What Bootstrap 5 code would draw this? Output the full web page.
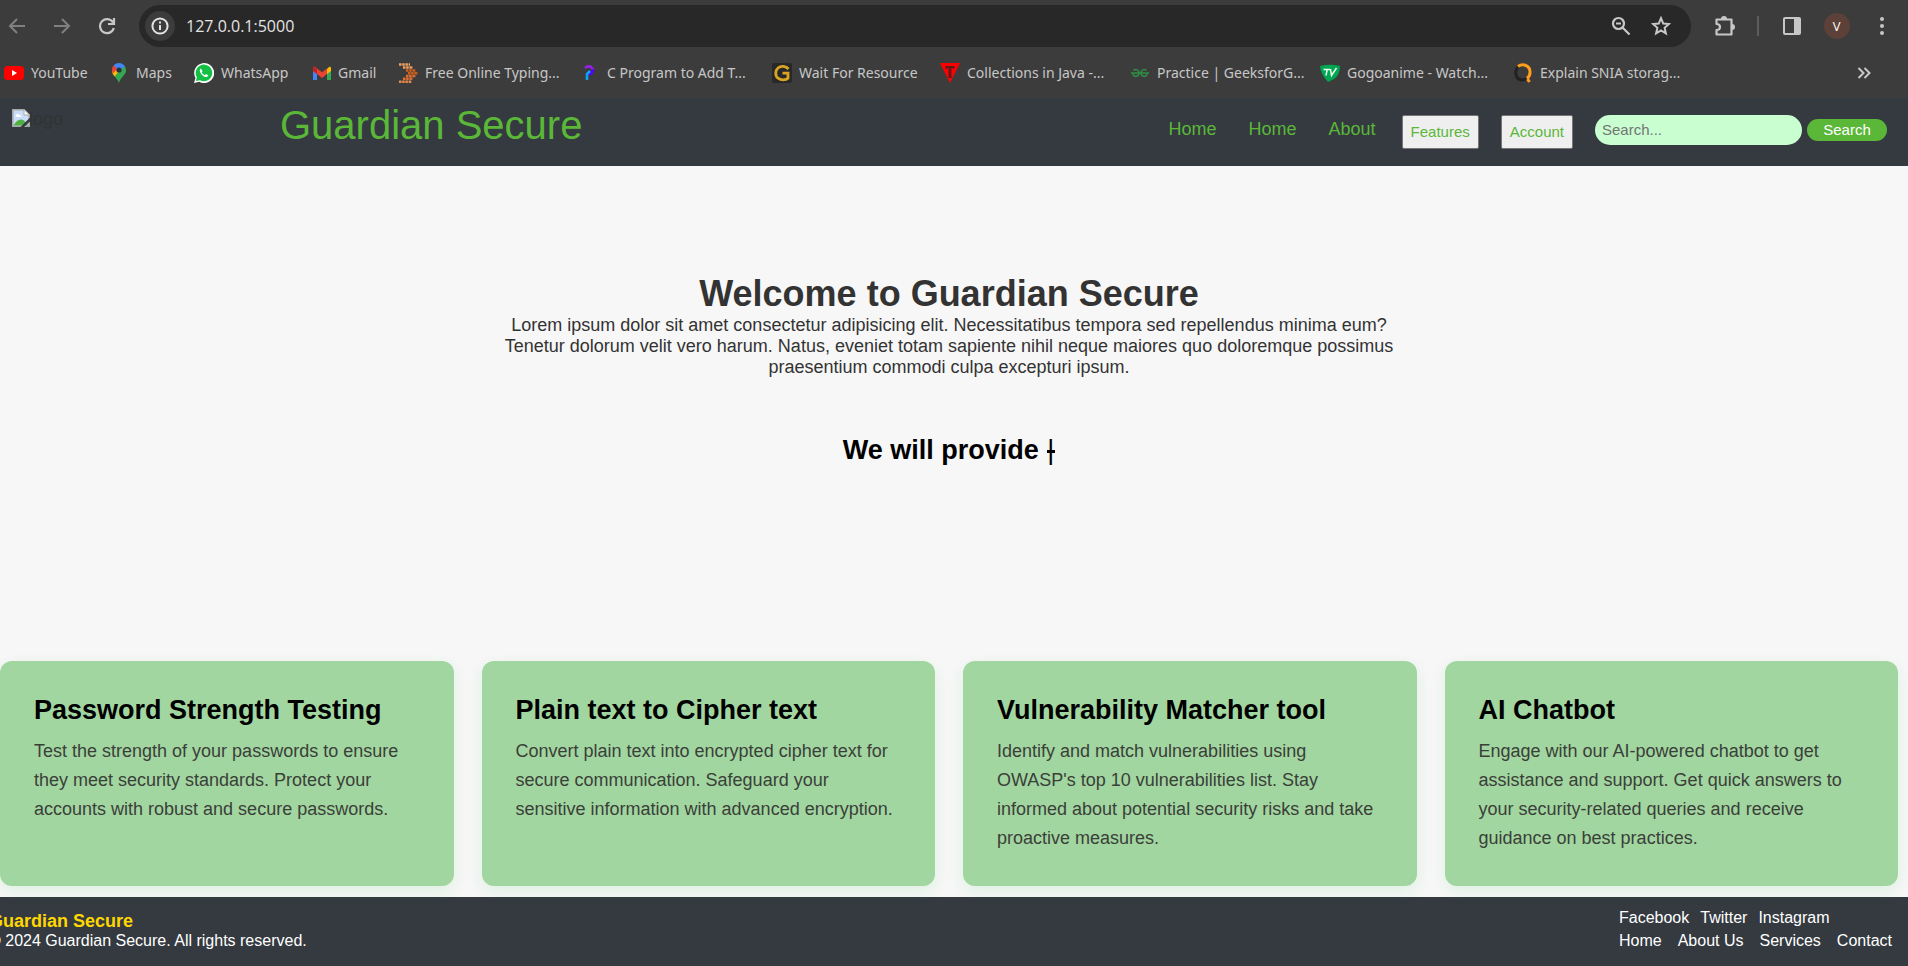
<!DOCTYPE html>
<html lang="en">
<head>
<meta charset="utf-8">
<meta name="viewport" content="width=device-width, initial-scale=1">
<title>Guardian Secure</title>
<link href="https://cdn.jsdelivr.net/npm/bootstrap@5.3.0/dist/css/bootstrap.min.css" rel="stylesheet">
<style>
  body { font-family: "Liberation Sans", Arial, sans-serif; font-size: 18px; line-height: 21px; color: #333; background: #f7f7f7; overflow-x: hidden; }
  svg { display: block; flex: none; }

  /* browser toolbar and bookmarks */
  .chrome-ui { background: #3c3c3c; color: #c7c7c7; font-family: "Open Sans", "Noto Sans", sans-serif; padding-top: 5px; }
  .tool-btn { background: none; border: 0; padding: 0; width: 24px; height: 24px; color: #c7c7c7; display: grid; place-items: center; flex: none; }
  .tool-btn:disabled { color: #808080; }
  .nav-tools { gap: 21px; width: 139px; padding-left: 5px; }
  .omnibox { height: 42px; background: #282828; border-radius: 21px; padding: 0 18px 0 6px; }
  .site-info { width: 30px; height: 30px; border-radius: 50%; background: #3c3c3c; color: #e3e3e3; }
  .address { background: none; border: 0; outline: 0; color: #e3e3e3; font-size: 16px; padding: 0; margin-left: 11px; min-width: 0; }
  .ext-tools { width: 217px; padding: 0 14px 0 22px; }
  .tool-rule { width: 2px; height: 20px; background: #5c5c5c; }
  .avatar { width: 26px; height: 26px; border-radius: 50%; background: #5d4037; color: #fff; font-size: 13px; }
  .bookmarks { height: 51px; padding: 0 32px 0 4px; font-family: "Noto Sans", sans-serif; font-size: 14px; }
  .bookmark-list { display: grid; grid-template-columns: 105px 85px 117px 87px 182px 192px 168px 190px 190px 193px auto; }
  .bookmark { display: flex; align-items: center; gap: 7px; color: #c7c7c7; text-decoration: none; white-space: nowrap; }

  /* site header */
  .site-nav { background: #343a40; min-height: 68px; padding: 0 21px 0 12px; }
  .logo-box { width: 50px; margin-top: 11px; color: #333; text-decoration: none; display: flex; }
  .logo-box svg { margin-right: -1px; }
  .brand-name { color: #5ab738; font-size: 40px; line-height: 46px; margin: 4px 0 0 218px; text-decoration: none; }
  .site-menu { padding-top: 17px; }
  .menu-links { gap: 32px; margin: 4px 26px 0 0; }
  .site-link { color: #5ab738; text-decoration: none; }
  .drop-btn { height: 34px; padding: 0 8px 2px; background: #efefef; border: 1px solid #767676; border-radius: 2px; color: #5ab738; font-size: 15px; margin-right: 22px; }
  .search-field { width: 207px; height: 30px; padding: 0 7px 1px; border: 0; border-radius: 15px; background: #c8fed0; font-size: 15px; color: #333; }
  .search-field::placeholder { color: #757575; opacity: 1; }
  .search-btn { width: 80px; height: 22px; line-height: 22px; padding: 0; border: 0; border-radius: 11px; background: #5ab738; color: #fff; font-size: 15px; margin-left: 5px; }

  /* hero */
  .page-main { padding-right: 10px; }
  .hero { min-height: 495px; padding-top: 107px; }
  .hero h1 { font-size: 36px; line-height: 42px; font-weight: 700; margin: 0; }
  .hero p { max-width: 900px; margin: 0 auto; }
  .typed { font-size: 27px; line-height: 32px; font-weight: 700; color: #000; margin-top: 56px; }
  .caret { position: relative; display: inline-block; font-weight: 400; width: 9px; }
  .caret::after { content: ""; position: absolute; left: 1px; right: 0; top: 16px; height: 3px; background: #000; }

  /* tools */
  .tool-grid { --bs-gutter-x: 28px; margin: 0 -14px; }
  .tool-card { background: #a2d6a0; border-radius: 12px; padding: 34px 34px 32px; min-height: 225px; box-shadow: 0 5px 16px rgba(40, 200, 70, .12); }
  .tool-card h2 { font-size: 27px; line-height: 30px; font-weight: 700; color: #000; margin: 0 0 12px; }
  .tool-card p { line-height: 29px; margin: 0; color: #3a4039; }

  .site-footer { background: #343a40; color: #fff; margin-top: 11px; min-height: 69px; padding: 9px 16px 0 0; font-size: 16px; line-height: 19px; }
  .site-footer a { color: #fff; text-decoration: none; }
  .about-block { margin-left: -11px; padding-top: 6px; }
  .foot-brand { color: #ffd700; font-size: 18px; font-weight: 700; }
  .foot-links { line-height: 23px; }
  .social-row { gap: 11px; }
  .page-row { gap: 16px; }
</style>
<script src="https://cdn.jsdelivr.net/npm/bootstrap@5.3.0/dist/js/bootstrap.bundle.min.js"></script>
</head>
<body>
<div class="chrome-ui">
  <div class="d-flex align-items-center">
    <div class="nav-tools d-flex align-items-center">
      <button class="tool-btn" disabled aria-label="Back"><svg width="18" height="18" viewBox="0 0 18 18" fill="none" stroke="currentColor" stroke-width="2"><path d="M17 9H2M9 2 2 9l7 7"/></svg></button>
      <button class="tool-btn" disabled aria-label="Forward"><svg width="18" height="18" viewBox="0 0 18 18" fill="none" stroke="currentColor" stroke-width="2"><path d="M1 9h15M9 2l7 7-7 7"/></svg></button>
      <button class="tool-btn" aria-label="Reload"><svg width="18" height="18" viewBox="0 0 18 18" fill="none" stroke="currentColor" stroke-width="2.2"><path d="M15 5.500A7 7 0 1 0 15.800 11M16 1v6h-6"/></svg></button>
    </div>
    <div class="omnibox d-flex align-items-center flex-grow-1">
      <button class="tool-btn site-info" aria-label="Site information"><svg width="18" height="18" viewBox="0 0 18 18" fill="none" stroke="currentColor" stroke-width="2"><circle cx="9" cy="9" r="7.600"/><path d="M9 8v5M9 4.500v2"/></svg></button>
      <input class="address flex-grow-1" type="text" value="127.0.0.1:5000" aria-label="Address">
      <button class="tool-btn me-3" aria-label="Zoom"><svg width="20" height="20" viewBox="0 0 20 20" fill="none" stroke="currentColor" stroke-width="2.200"><circle cx="7.500" cy="7.500" r="5.500"/><path d="M5 7.500h5M11.500 11.500l7 7"/></svg></button>
      <button class="tool-btn" aria-label="Bookmark this page"><svg width="20" height="20" viewBox="0 0 20 20" fill="none" stroke="currentColor" stroke-width="2"><path d="M10 2.200l2.200 5.300 5.700.5-4.300 3.800 1.300 5.600L10 14.400l-4.900 3 1.300-5.600L2.100 8l5.700-.5z"/></svg></button>
    </div>
    <div class="ext-tools d-flex align-items-center justify-content-between">
      <button class="tool-btn" aria-label="Extensions"><svg width="22" height="22" viewBox="0 0 22 22"><path d="M2.500 4.500H17.500V19.500H2.500V15Q6 15 6 12T2.500 9Z" fill="none" stroke="currentColor" stroke-width="2.200" stroke-linejoin="round"/><path d="M7 4a3 3 0 0 1 6 0zM18 9a3 3 0 0 1 0 6z" fill="currentColor"/></svg></button>
      <span class="tool-rule"></span>
      <button class="tool-btn" aria-label="Side panel"><svg width="18" height="18" viewBox="0 0 18 18"><rect x="1" y="1" width="16" height="16" rx="1" fill="none" stroke="currentColor" stroke-width="2"/><path d="M11 1h6v16h-6z" fill="currentColor"/></svg></button>
      <button class="tool-btn avatar" aria-label="Profile">V</button>
      <button class="tool-btn" aria-label="Menu"><svg width="4" height="18" viewBox="0 0 4 18" fill="currentColor"><circle cx="2" cy="2" r="2"/><circle cx="2" cy="9" r="2"/><circle cx="2" cy="16" r="2"/></svg></button>
    </div>
  </div>
  <nav class="bookmarks d-flex align-items-center justify-content-between" aria-label="Bookmarks">
    <div class="bookmark-list">
      <a class="bookmark" href="#"><svg width="20" height="20" viewBox="0 0 20 20"><rect y="3" width="20" height="14" rx="3.500" fill="#f00"/><path d="M8 7l5 3-5 3z" fill="#fff"/></svg>YouTube</a>
      <a class="bookmark" href="#"><svg width="20" height="20" viewBox="0 0 20 20"><path d="M10 20C9 16 3 12 3 7l14 0c0 5-6 8-7 13z" fill="#34a853"/><path d="M3 7c0 3 1 4.500 2.500 6.500L13 5 6 3z" fill="#fbbc04"/><path d="M3 7c0-2 .6-3.400 1.800-4.700L8.500 5.500 4 10.500C3.300 9.300 3 8.200 3 7z" fill="#ea4335"/><path d="M4.800 2.300C7.800-1.200 14-.6 16 3.500L10 9.500 7.500 5.500z" fill="#4285f4"/><path d="M16 3.500c1 1.800 1.300 4 .4 6l-4.400 0L9 8z" fill="#34a853"/><circle cx="10" cy="7" r="2.600" fill="#283040"/></svg>Maps</a>
      <a class="bookmark" href="#"><svg width="20" height="20" viewBox="0 0 20 20"><path d="M0 20l1.500-5A10 10 0 1 1 5.200 18.700z" fill="#fff"/><path d="M1.900 18.100l1-3.800A8.300 8.300 0 1 1 6 17.200z" fill="#12c143"/><path d="M6.800 5.500c-1 .6-1.400 2-.7 3.400 1 2.400 2.800 4.100 5 5 1.500.6 2.900-.2 3.200-1.600l-2.300-1.200-1.100 1.200c-1.500-.7-2.500-1.700-3.200-3.100l.9-1z" fill="#fff"/></svg>WhatsApp</a>
      <a class="bookmark" href="#"><svg width="20" height="20" viewBox="0 0 20 20"><path d="M2 6v11h4V8z" fill="#4285f4"/><path d="M16 8v9h4V6z" fill="#34a853"/><path d="M16 6l2-2c1-.8 2 0 2 1v3l-4 3z" fill="#fbbc04"/><path d="M2 8V5c0-1 1-1.800 2-1l7 5.200L16 5.500V11l-5 4-5-4z" fill="#ea4335"/><path d="M2 8V5c0-1 .8-1.500 1.500-1.200L6 6v5z" fill="#c5221f"/></svg>Gmail</a>
      <a class="bookmark" href="#"><svg width="20" height="20" viewBox="0 0 20 20" fill="none" stroke-width="2.600" stroke-dasharray="2.500 .7"><path d="M1 1.500h11M5 4.500h10" stroke="#f0a060"/><path d="M8 7.500h10M10 10.300h10" stroke="#d2601a"/><path d="M8 13h10M5 15.800h10" stroke="#e07030"/><path d="M1 18.700h13" stroke="#e88a48"/></svg>Free Online Typing...</a>
      <a class="bookmark" href="#"><svg width="20" height="20" viewBox="0 0 20 20" fill="none"><path d="M5 5l2-1.500h3.500L13.500 7" stroke="#9a20f0" stroke-width="2.500"/><path d="M13.500 6.500l-2.500 4-3.500.5" stroke="#5a00f5" stroke-width="3"/><path d="M7 17v-6l3-3" stroke="#08a4ff" stroke-width="2.600"/></svg>C Program to Add T...</a>
      <a class="bookmark" href="#"><svg width="20" height="20" viewBox="0 0 20 20"><rect width="20" height="20" rx="2" fill="#282828"/><path d="M16.500 6C14 3 9 2.500 6 5s-3 8 0 10.200 8 2 10 0v-5h-5.500" fill="none" stroke="#daa520" stroke-width="2.800"/></svg>Wait For Resource</a>
      <a class="bookmark" href="#"><svg width="20" height="20" viewBox="0 0 20 20"><path d="M0 0h20L10 20z" fill="#f00"/><path d="M5.500 3h9v3h-1.200l-.8-1h-1v9l.5 1H8l.5-1V5h-1l-.8 1H5.500z" fill="#60181a"/></svg>Collections in Java -...</a>
      <a class="bookmark" href="#"><svg width="20" height="20" viewBox="0 0 20 20" fill="none" stroke="#2f8d46" stroke-width="1.600"><path d="M1 10h18M3.500 7.500c2.500-2 5.500-.5 5.500 2.500 0 4-5.500 4.500-6 1M16.500 7.500c-2.500-2-5.500-.5-5.500 2.500 0 4 5.500 4.500 6 1"/></svg>Practice | GeeksforG...</a>
      <a class="bookmark" href="#"><svg width="20" height="20" viewBox="0 0 20 20"><path d="M0 3Q10 .5 20 3q0 9-6 13l-6 3Q.5 11 0 3z" fill="#00a651"/><path d="M3.500 6.500H10M7.200 6.500L6 12.500M10.500 6l1 6.500L16.500 5" fill="none" stroke="#e9fff2" stroke-width="1.500"/></svg>Gogoanime - Watch...</a>
      <a class="bookmark" href="#"><svg width="20" height="20" viewBox="0 0 20 20" fill="none" stroke-width="3"><path d="M6 3.500C1 7 2 16.500 9 17q3 0 4.500-1.500" stroke="#222"/><path d="M5 3.500C10-.5 17.500 3 17 9.500c0 3-1 4.500-3 6M14.500 16l2 3" stroke="#ff9d1c"/></svg>Explain SNIA storag...</a>
    </div>
    <button class="tool-btn" aria-label="More bookmarks"><svg width="14" height="12" viewBox="0 0 14 12" fill="none" stroke="currentColor" stroke-width="2"><path d="M1.500 1l5 5-5 5M7.500 1l5 5-5 5"/></svg></button>
  </nav>
</div>

<header class="site-nav d-flex align-items-start">
  <a class="logo-box" href="#"><svg width="18" height="18" viewBox="0 0 18 18"><path d="M.8.800H12L17.200 6v11.200H.8z" fill="#c9dcfb" stroke="#a8a8a8" stroke-width="1.600"/><path d="M12 .5V6h5.500z" fill="#fff" stroke="#a8a8a8"/><path d="M3.500 7c0-2 3-3 4-1 2-.3 2.500 2 1 2H4.500z" fill="#fff"/><path d="M1.600 16.400C4 11 9 9 12 11.500l4.400 4.900z" fill="#52b043"/><path d="M18 8.500L8.500 18H12l6-5.500z" fill="#343a40"/></svg>logo</a>
  <a class="brand-name" href="#">Guardian Secure</a>
  <nav class="site-menu d-flex align-items-start ms-auto">
    <div class="menu-links d-flex">
      <a class="site-link" href="#">Home</a>
      <a class="site-link" href="#">Home</a>
      <a class="site-link" href="#">About</a>
    </div>
    <button class="drop-btn" type="button">Features</button>
    <button class="drop-btn" type="button">Account</button>
    <form class="d-flex align-items-center">
      <input class="search-field" type="text" placeholder="Search..." aria-label="Search">
      <button class="search-btn" type="button">Search</button>
    </form>
  </nav>
</header>

<main class="page-main">
  <section class="hero text-center">
    <h1>Welcome to Guardian Secure</h1>
    <p>Lorem ipsum dolor sit amet consectetur adipisicing elit. Necessitatibus tempora sed repellendus minima eum? Tenetur dolorum velit vero harum. Natus, eveniet totam sapiente nihil neque maiores quo doloremque possimus praesentium commodi culpa excepturi ipsum.</p>
    <div class="typed">We will provide <span class="caret">|</span></div>
  </section>
  <section>
    <div class="row tool-grid">
      <div class="col-3"><article class="tool-card h-100">
        <h2>Password Strength Testing</h2>
        <p>Test the strength of your passwords to ensure they meet security standards. Protect your accounts with robust and secure passwords.</p>
      </article></div>
      <div class="col-3"><article class="tool-card h-100">
        <h2>Plain text to Cipher text</h2>
        <p>Convert plain text into encrypted cipher text for secure communication. Safeguard your sensitive information with advanced encryption.</p>
      </article></div>
      <div class="col-3"><article class="tool-card h-100">
        <h2>Vulnerability Matcher tool</h2>
        <p>Identify and match vulnerabilities using OWASP's top 10 vulnerabilities list. Stay informed about potential security risks and take proactive measures.</p>
      </article></div>
      <div class="col-3"><article class="tool-card h-100">
        <h2>AI Chatbot</h2>
        <p>Engage with our AI-powered chatbot to get assistance and support. Get quick answers to your security-related queries and receive guidance on best practices.</p>
      </article></div>
    </div>
  </section>
</main>

<footer class="site-footer d-flex justify-content-between">
  <div class="about-block">
    <div class="foot-brand">Guardian Secure</div>
    <div>© 2024 Guardian Secure. All rights reserved.</div>
  </div>
  <div class="foot-links">
    <div class="social-row d-flex"><a href="#">Facebook</a><a href="#">Twitter</a><a href="#">Instagram</a></div>
    <div class="page-row d-flex"><a href="#">Home</a><a href="#">About Us</a><a href="#">Services</a><a href="#">Contact</a></div>
  </div>
</footer>
</body>
</html>
